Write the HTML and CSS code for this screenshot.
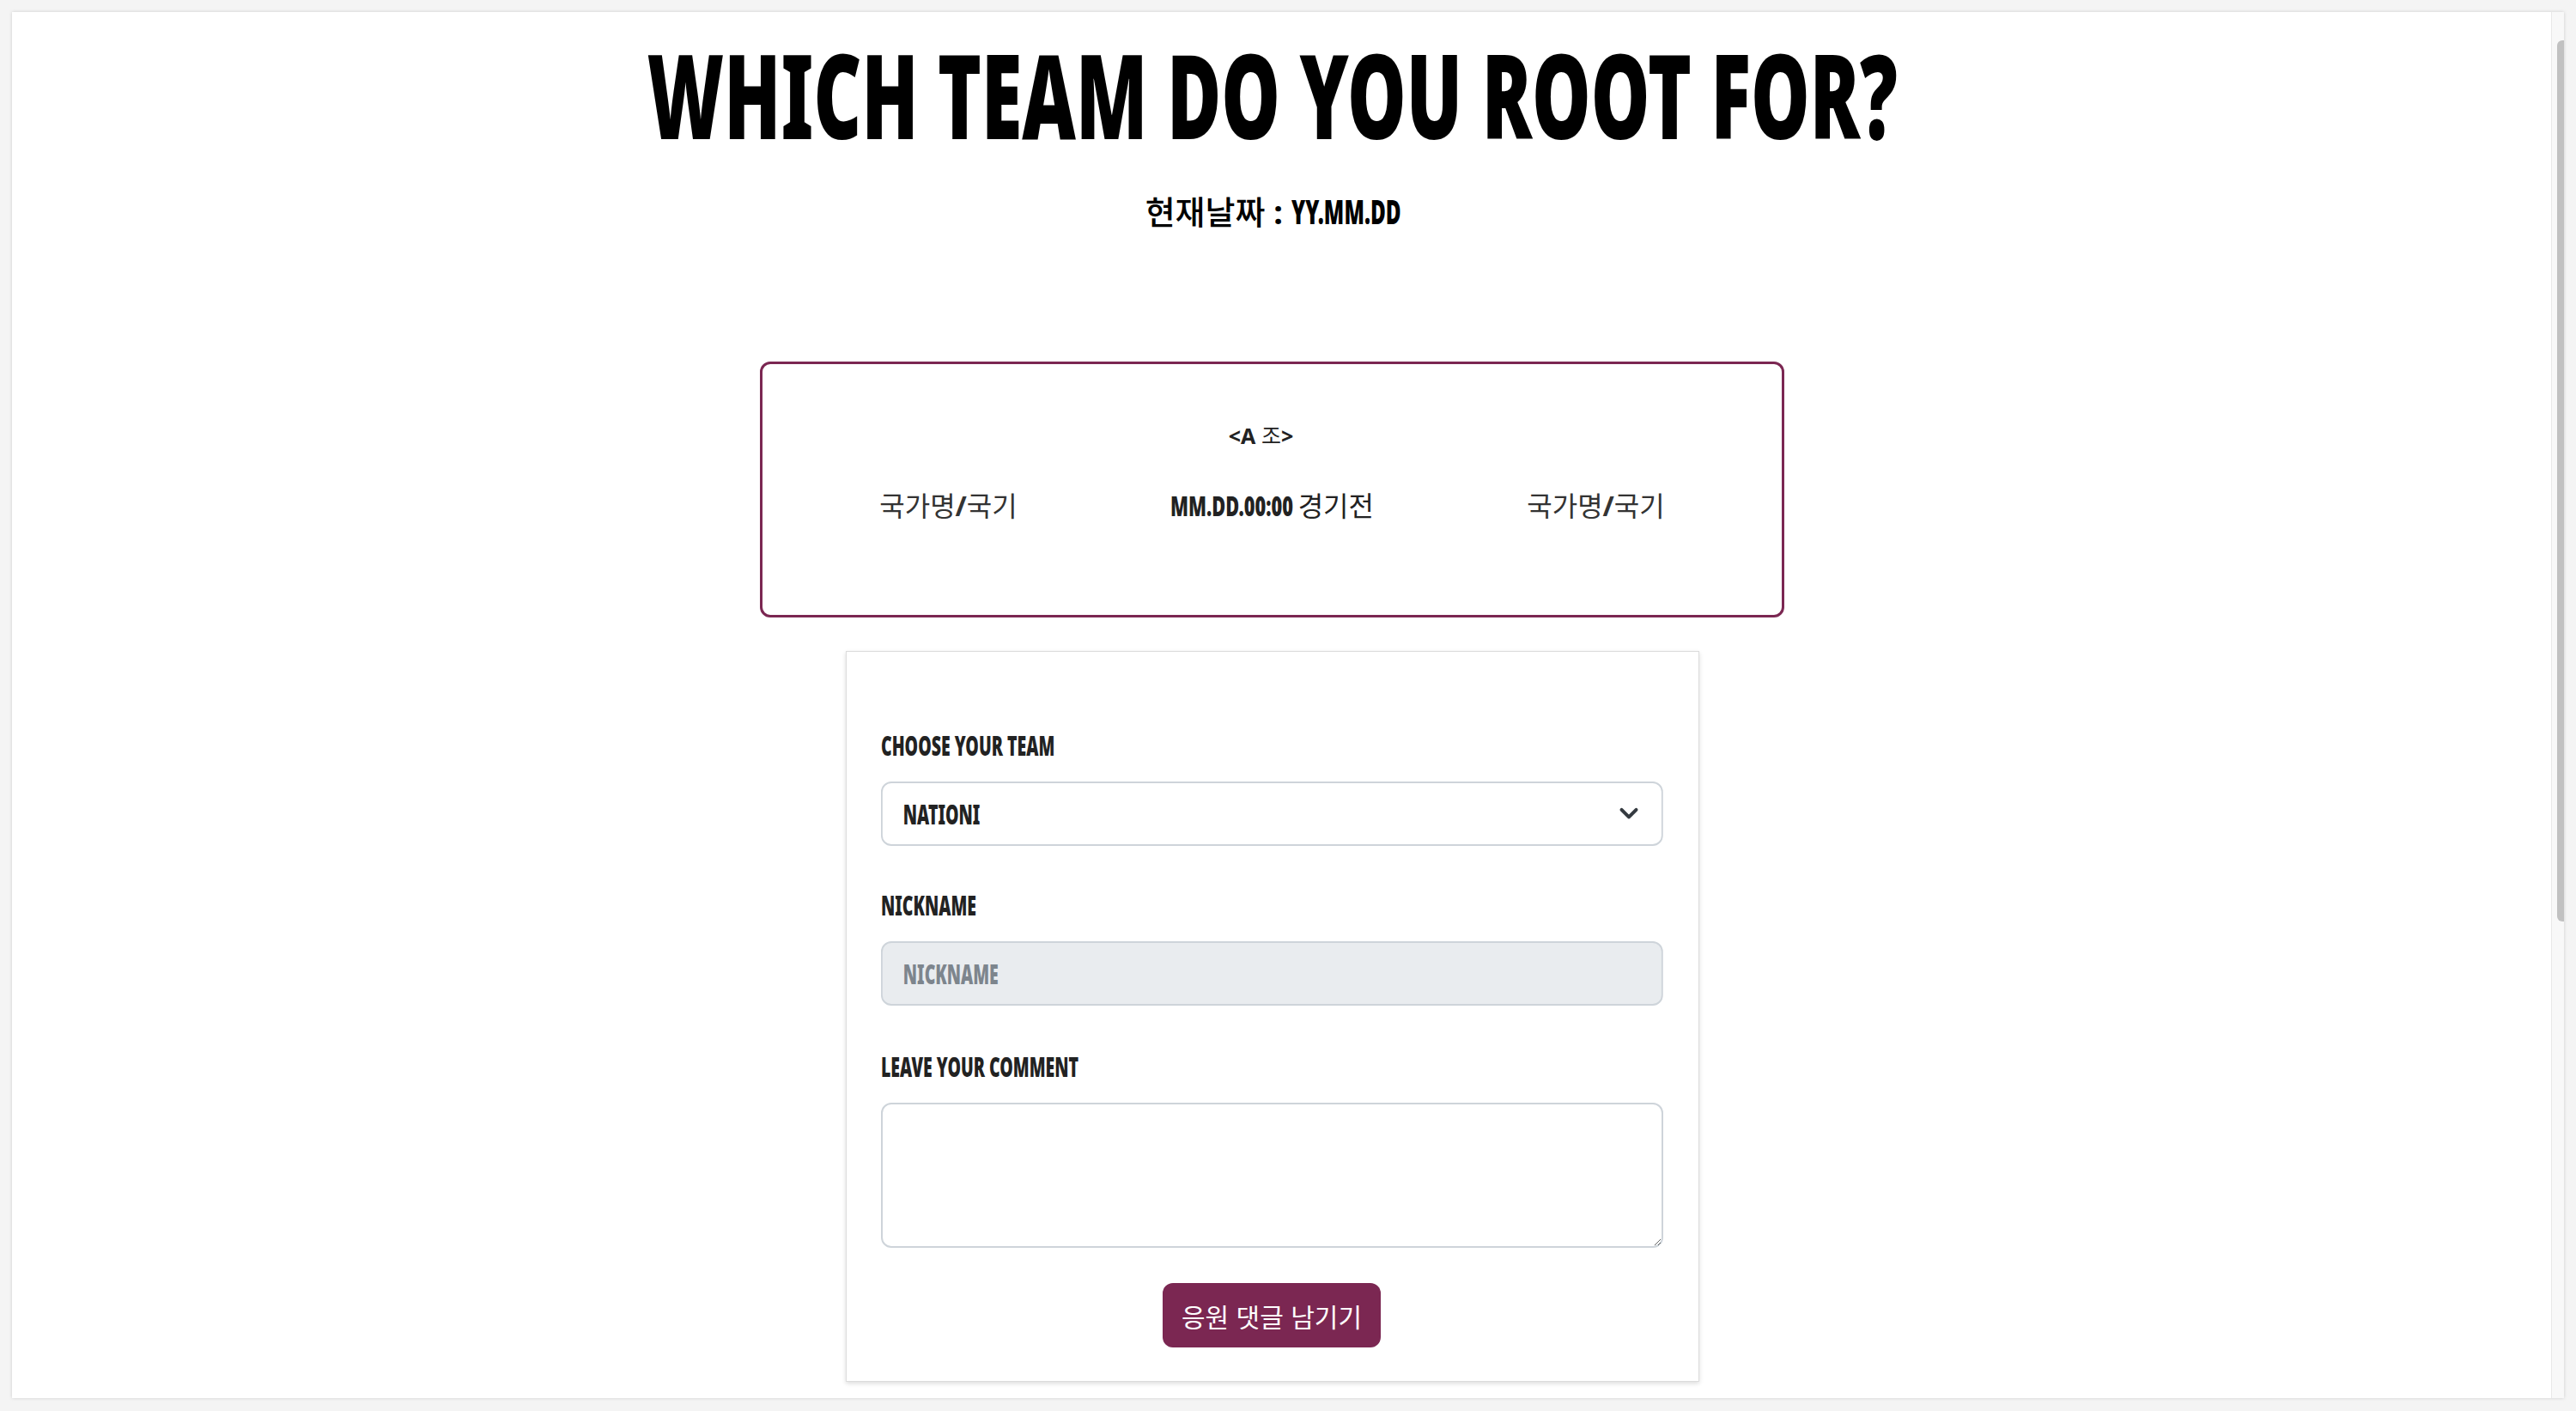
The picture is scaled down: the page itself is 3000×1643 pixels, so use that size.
FILE: index.html
```html
<!DOCTYPE html>
<html lang="ko">
<head>
<meta charset="utf-8">
<title>Which team do you root for?</title>
<link rel="stylesheet" href="styles.css">
</head>
<body>
<div class="window">
  <main class="page">
    <h1 class="title"><span class="sq-title">WHICH TEAM DO YOU ROOT FOR?</span></h1>
    <p class="today"><span class="ko">현재날짜</span> : <b class="sq-date">YY.MM.DD</b></p>

    <section class="match">
      <div class="group">&lt;A <span class="ko">조</span>&gt;</div>
      <div class="teams">
        <div class="team"><span class="ko">국가명</span>/<span class="ko">국기</span></div>
        <div class="time"><span class="sq-time">MM.DD.00:00</span> <span class="ko">경기전</span></div>
        <div class="team"><span class="ko">국가명</span>/<span class="ko">국기</span></div>
      </div>
    </section>

    <form class="cheer">
      <label class="field-label" for="team"><span class="sq-label">CHOOSE YOUR TEAM</span></label>
      <div class="field">
        <select id="team" class="control select">
          <option>NATIONI</option>
        </select>
        <svg class="chevron" viewBox="0 0 16 12" width="32" height="24" aria-hidden="true">
          <path d="M3.75 3.9 8 8.15 12.25 3.9" fill="none" stroke="#343a40" stroke-width="2" stroke-linecap="round" stroke-linejoin="round"/>
        </svg>
      </div>

      <label class="field-label gap" for="nick"><span class="sq-label">NICKNAME</span></label>
      <div class="field">
        <input id="nick" class="control input" placeholder="NICKNAME" disabled>
      </div>

      <label class="field-label gap2" for="comment"><span class="sq-label">LEAVE YOUR COMMENT</span></label>
      <textarea id="comment" class="area"></textarea>

      <div class="actions">
        <button class="submit" type="button">응원 댓글 남기기</button>
      </div>
    </form>
  </main>
  <div class="scrollbar"><div class="thumb"></div></div>
</div>
</body>
</html>
```

FILE: styles.css
```css
html, body {
  margin: 0;
  background: #f4f4f4;
}

body {
  padding: 14px;
  height: 1643px;
  box-sizing: border-box;
  overflow: hidden;
}

.window {
  display: flex;
  width: 2972px;
  height: 1614px;
  background: #fff;
  box-shadow: 0 0 4px rgba(0, 0, 0, 0.16);
  overflow: hidden;
}

.page {
  flex: 1;
  display: flex;
  flex-direction: column;
  align-items: center;
  padding: 27px 22px 0 0;
  font-family: "Noto Sans", "Noto Sans CJK KR", sans-serif;
  font-weight: 700;
  color: #212529;
}

.ko {
  font-family: "Noto Sans CJK KR", "Noto Sans", sans-serif;
  font-weight: 400;
}

.scrollbar {
  width: 14px;
  background: #f8f8f8;
  border-left: 1px solid #e8e8e8;
  padding-top: 33px;
  display: flex;
  justify-content: flex-end;
  align-items: flex-start;
}

.thumb {
  width: 8px;
  height: 1026px;
  background: #c1c1c1;
  border-radius: 6px 0 0 6px;
}

/* condensed display type (horizontal squeeze of a heavy sans) */
.sq-title,
.sq-date,
.sq-time,
.sq-label {
  display: inline-block;
  white-space: nowrap;
}

/* heading */
.title {
  margin: 0;
  font-size: 137px;
  line-height: 137px;
  font-weight: 900;
  color: #000;
  white-space: nowrap;
}

.sq-title {
  transform: scaleX(0.63);
}

.today {
  margin: 44px 0 0;
  font-size: 38px;
  line-height: 46px;
  color: #000;
}

.today .ko {
  font-weight: 500;
}

.sq-date {
  font-weight: 900;
  transform: scaleX(0.64);
  transform-origin: left center;
  margin-right: -74px;
}

/* match card */
.match {
  margin-top: 152px;
  width: 1193px;
  height: 298px;
  box-sizing: border-box;
  border: 3px solid #7b2752;
  border-radius: 12px;
  padding: 64px 28px 0;
}

.group {
  font-size: 25px;
  line-height: 36px;
  text-align: center;
  padding-right: 26px;
  color: #222;
}

.teams {
  margin-top: 38px;
  display: grid;
  grid-template-columns: repeat(3, 1fr);
  font-size: 32px;
  line-height: 48px;
  text-align: center;
  color: #333;
}

.time {
  color: #222;
}

.sq-time {
  font-weight: 900;
  transform: scaleX(0.68);
  transform-origin: left center;
  margin-right: -70px;
}

/* form */
.cheer {
  margin-top: 39px;
  width: 994px;
  box-sizing: border-box;
  border: 1px solid #dcdcdc;
  box-shadow: 0 2px 5px rgba(0, 0, 0, 0.14);
  padding: 85px 41px 39px 40px;
  display: flex;
  flex-direction: column;
}

.field-label {
  display: block;
  font-size: 32px;
  line-height: 48px;
  margin-bottom: 18px;
  font-weight: 900;
  color: #222;
}

.sq-label {
  transform: scaleX(0.61);
  transform-origin: left center;
}

.field-label.gap {
  margin-top: 45px;
}

.field-label.gap2 {
  margin-top: 47px;
}

.field {
  position: relative;
  height: 75px;
}

/* controls drawn 1/0.61 wide and squeezed back, so their text matches the condensed type;
   horizontal border, radius and padding are pre-divided by the same factor */
.control {
  display: block;
  width: calc(100% / 0.61);
  box-sizing: border-box;
  height: 75px;
  margin: 0;
  padding: 0 0 0 39.3px;
  border-style: solid;
  border-color: #ced4da;
  border-width: 2px 3.28px;
  border-radius: 19.7px / 12px;
  background: #fff;
  font-family: "Noto Sans", sans-serif;
  font-size: 32px;
  font-weight: 900;
  color: #222;
  outline: none;
  transform: scaleX(0.61);
  transform-origin: left top;
}

.select {
  appearance: none;
  -webkit-appearance: none;
}

.chevron {
  position: absolute;
  right: 24px;
  top: 25px;
  pointer-events: none;
}

.input:disabled {
  background: #e9ecef;
  opacity: 1;
}

.input::placeholder {
  color: #7d858d;
  opacity: 1;
}

.area {
  display: block;
  width: 100%;
  box-sizing: border-box;
  height: 169px;
  margin: 0;
  padding: 12px 24px;
  border: 2px solid #ced4da;
  border-radius: 12px;
  background: #fff;
  font-family: "Noto Sans", sans-serif;
  font-size: 32px;
  outline: none;
  resize: vertical;
}

.actions {
  display: flex;
  justify-content: center;
  margin-top: 41px;
}

.submit {
  width: 254px;
  height: 75px;
  border: none;
  border-radius: 12px;
  background: #7b2752;
  color: #fff;
  font-family: "Noto Sans CJK KR", sans-serif;
  font-size: 30px;
  font-weight: 400;
  padding: 0;
}
```
